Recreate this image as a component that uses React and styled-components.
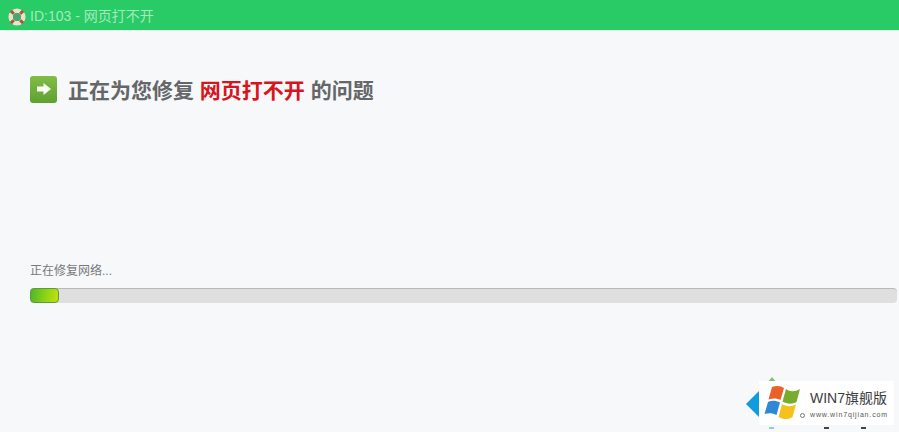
import styled, { createGlobalStyle } from "styled-components";

const GlobalStyle = createGlobalStyle`
  html, body {
    margin: 0;
    padding: 0;
    background: #f6f8fa;
  }
  body {
    font-family: "Liberation Sans", "Noto Sans CJK SC", sans-serif;
  }
`;

const RingIcon = () => (
  <RingSvg viewBox="0 0 20 20">
    <circle cx="10" cy="10" r="7" fill="none" stroke="#ece2cc" strokeWidth="5" />
    <g stroke="#a8553c" strokeWidth="3.4" strokeLinecap="butt">
      <path d="M3.2 3.2 L6.4 6.4" />
      <path d="M16.8 3.2 L13.6 6.4" />
      <path d="M3.2 16.8 L6.4 13.6" />
      <path d="M16.8 16.8 L13.6 13.6" />
    </g>
    <circle cx="10" cy="10" r="4.4" fill="#4aa56e" />
  </RingSvg>
);

const ArrowBadge = () => (
  <svg width="16" height="14" viewBox="0 0 16 14">
    <path d="M1 4.6 H7.5 V1 L15 7 L7.5 13 V9.4 H1Z" fill="#fbfdf5" />
  </svg>
);

const WindowsLogo = () => (
  <svg width="38" height="38" viewBox="0 0 38 38">
    <path d="M8 3 C13 1 17 2 20 4 L16.5 16 C13 14 9 14 4.5 15.5Z" fill="#e8622a" />
    <path d="M22 5 C26 8 31 8 36 5 L32.5 18 C28 20.5 23 20 18.5 17.5Z" fill="#78ac2e" />
    <path d="M4 18 C8 16 12 16.5 16 18.5 L12.5 31 C9 29 5 28.5 0.5 30Z" fill="#2f88d6" />
    <path d="M18 20 C22 22.5 27 23 32 20.5 L28.5 33 C24 36 19 35.5 14.5 33Z" fill="#f5c21d" />
  </svg>
);

const App = () => (
  <>
    <GlobalStyle />
    <Page>
      <Header>
        <RingIcon />
        <HeaderTitle>ID:103 - 网页打不开</HeaderTitle>
      </Header>

      <Content>
        <Heading>
          <ArrowBox>
            <ArrowBadge />
          </ArrowBox>
          <HeadingText>
            正在为您修复 <Problem>网页打不开</Problem> 的问题
          </HeadingText>
        </Heading>

        <Status>正在修复网络...</Status>
        <ProgressTrack>
          <ProgressFill />
        </ProgressTrack>
      </Content>

      <PeekTop />
      <PeekLeft />
      <ClippedMark $left={769} $color="#8fcdea" />
      <ClippedMark $left={824} $color="#444" />
      <ClippedMark $left={861} $color="#444" />
      <Watermark>
        <WindowsLogo />
        <WatermarkText>
          <WatermarkTitle>WIN7旗舰版</WatermarkTitle>
          <WatermarkUrl>www.win7qijian.com</WatermarkUrl>
        </WatermarkText>
        <WatermarkDot />
      </Watermark>
    </Page>
  </>
);

export default App;

const Page = styled.div`
  position: relative;
  width: 899px;
  height: 432px;
  overflow: hidden;
  background: #f6f8fa;
`;

const Header = styled.div`
  display: flex;
  align-items: center;
  gap: 4px;
  box-sizing: border-box;
  height: 31px;
  padding-left: 8px;
  background: #28cb65;
  border-bottom: 1px solid #dff3e6;
`;

const RingSvg = styled.svg`
  width: 18px;
  height: 18px;
  margin-top: 3px;
`;

const HeaderTitle = styled.span`
  font-size: 14px;
  color: #a6e9bf;
`;

const Content = styled.div`
  display: flex;
  flex-direction: column;
  padding: 43px 2px 0 30px;
`;

const Heading = styled.div`
  display: flex;
  align-items: center;
  gap: 11px;
  height: 30px;
`;

const ArrowBox = styled.div`
  display: flex;
  align-items: center;
  justify-content: center;
  width: 27px;
  height: 27px;
  border-radius: 3px;
  background: linear-gradient(180deg, #82bd45 0%, #5fa032 100%);
`;

const HeadingText = styled.div`
  font-size: 21px;
  font-weight: bold;
  color: #646668;
  white-space: pre;
`;

const Problem = styled.span`
  color: #d8141c;
`;

const Status = styled.div`
  margin-top: 157px;
  font-size: 12px;
  line-height: 20px;
  color: #77797b;
`;

const ProgressTrack = styled.div`
  margin-top: 7px;
  height: 15px;
  box-sizing: border-box;
  border-top: 1px solid #b8b9b8;
  border-radius: 4px;
  background: #dfdfdf;
`;

const ProgressFill = styled.div`
  box-sizing: border-box;
  width: 29px;
  height: 15px;
  margin-top: -1px;
  border: 1px solid #5c9a3a;
  border-radius: 4px;
  background: linear-gradient(100deg, #4fb52c 0%, #8fd414 55%, #c6e010 100%);
`;

const PeekTop = styled.div`
  position: absolute;
  left: 767px;
  top: 377px;
  width: 0;
  height: 0;
  border-left: 5px solid transparent;
  border-right: 5px solid transparent;
  border-bottom: 6px solid #7cc576;
`;

const PeekLeft = styled.div`
  position: absolute;
  left: 746px;
  top: 391px;
  width: 0;
  height: 0;
  border-top: 13px solid transparent;
  border-bottom: 13px solid transparent;
  border-right: 13px solid #0f9bdc;
`;

const ClippedMark = styled.div`
  position: absolute;
  left: ${(p) => p.$left}px;
  top: 427px;
  width: 5px;
  height: 2px;
  background: ${(p) => p.$color};
`;

const Watermark = styled.div`
  position: absolute;
  left: 759px;
  top: 381px;
  display: flex;
  align-items: center;
  gap: 8px;
  box-sizing: border-box;
  width: 135px;
  height: 44px;
  padding-left: 5px;
  background: #fff;
`;

const WatermarkText = styled.div`
  display: flex;
  flex-direction: column;
  gap: 4px;
  padding-top: 2px;
`;

const WatermarkTitle = styled.div`
  font-size: 14px;
  line-height: 16px;
  color: #3c3c3e;
  white-space: nowrap;
`;

const WatermarkUrl = styled.div`
  font-size: 7px;
  line-height: 9px;
  letter-spacing: 0.85px;
  color: #555;
  white-space: nowrap;
`;

const WatermarkDot = styled.div`
  position: absolute;
  left: 41px;
  top: 32px;
  width: 3px;
  height: 3px;
  border: 1px solid #777;
  border-radius: 50%;
`;
